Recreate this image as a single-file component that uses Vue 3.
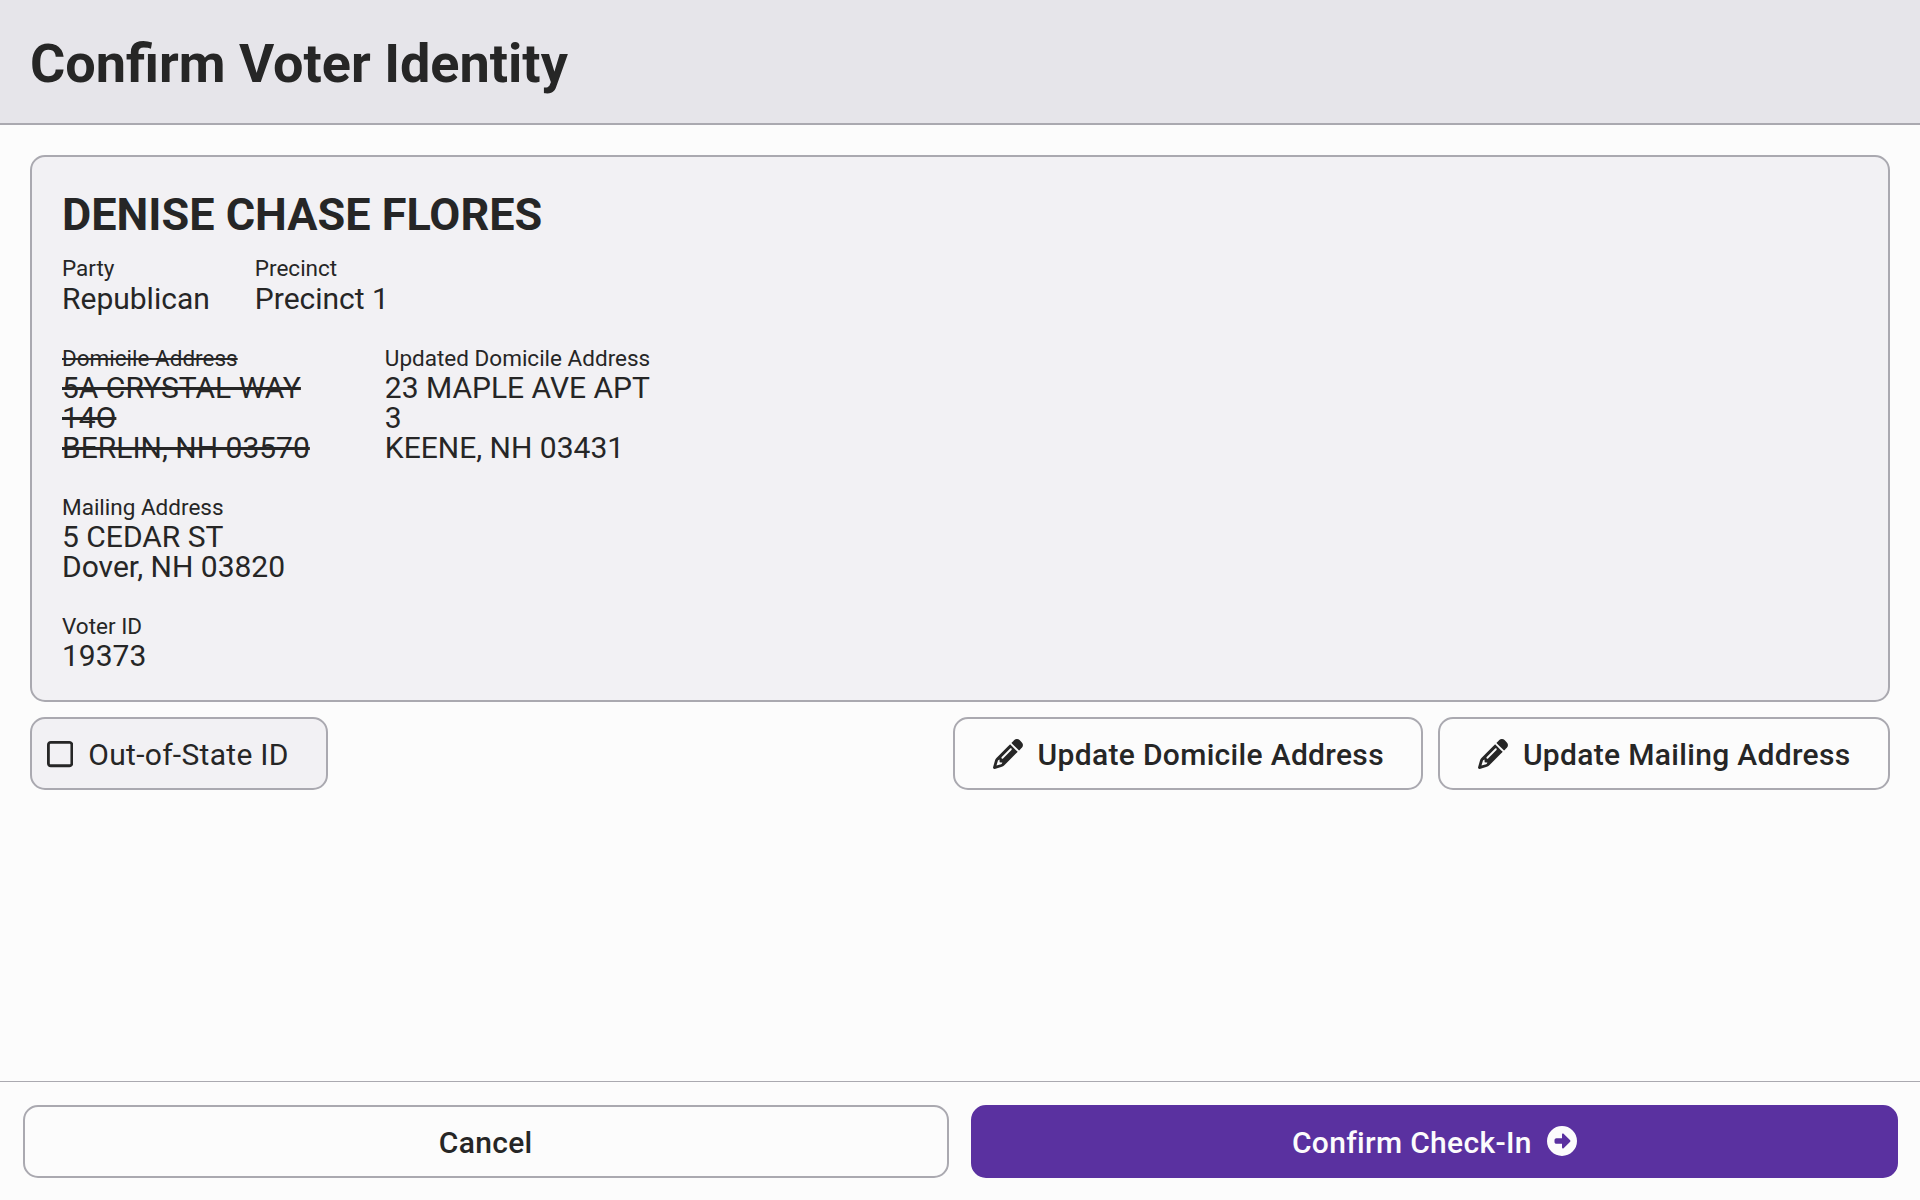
<script setup>
const pencil = 'M410.3 231l11.3-11.3-33.9-33.9-62.1-62.1L291.7 89.8l-11.3 11.3-22.6 22.6L58.6 322.9c-10.4 10.4-18 23.3-22.2 37.4L1 480.7c-2.5 8.4-.2 17.5 6.1 23.7s15.3 8.5 23.7 6.1l120.3-35.4c14.1-4.2 27-11.8 37.4-22.2L387.7 253.7 410.3 231zM160 399.4l-9.1 22.7c-4 3.1-8.5 5.4-13.3 6.9L59.4 452l23-78.1c1.4-4.9 3.8-9.4 6.9-13.3l22.7-9.1v32c0 8.8 7.2 16 16 16h32zM362.7 18.7L348.3 33.2 325.7 55.8 314.3 67.1l33.9 33.9 62.1 62.1 33.9 33.9 11.3-11.3 22.6-22.6 14.5-14.5c25-25 25-65.5 0-90.5L453.3 18.7c-25-25-65.5-25-90.5 0zm-47.4 168l-144 144c-6.2 6.2-16.4 6.2-22.6 0s-6.2-16.4 0-22.6l144-144c6.2-6.2 16.4-6.2 22.6 0s6.2 16.4 0 22.6z'

const updates = ['Update Domicile Address', 'Update Mailing Address']

const rows = [
  {
    kind: 'summary',
    fields: [
      { label: 'Party', lines: ['Republican'] },
      { label: 'Precinct', lines: ['Precinct 1'] },
    ],
  },
  {
    kind: 'address',
    fields: [
      { label: 'Domicile Address', lines: ['5A CRYSTAL WAY', '14O', 'BERLIN, NH 03570'], replaced: true },
      { label: 'Updated Domicile Address', lines: ['23 MAPLE AVE APT', '3', 'KEENE, NH 03431'] },
    ],
  },
  { kind: 'address', fields: [{ label: 'Mailing Address', lines: ['5 CEDAR ST', 'Dover, NH 03820'] }] },
  { kind: 'address', fields: [{ label: 'Voter ID', lines: ['19373'] }] },
]
</script>

<template>
  <div class="screen">
    <header class="header"><h1>Confirm Voter Identity</h1></header>

    <main class="main">
      <section class="card">
        <h2>DENISE CHASE FLORES</h2>
        <div class="rows">
          <div v-for="(row, i) in rows" :key="i" class="row" :class="row.kind">
            <div v-for="field in row.fields" :key="field.label" class="field" :class="{ replaced: field.replaced }">
              <div class="label">{{ field.label }}</div>
              <div v-for="line in field.lines" :key="line" class="value">{{ line }}</div>
            </div>
          </div>
        </div>
      </section>

      <div class="actions">
        <button class="btn checkbox" role="checkbox" aria-checked="false">
          <svg class="square" viewBox="0 0 448 512" aria-hidden="true">
            <path d="M384 80c8.8 0 16 7.2 16 16V416c0 8.8-7.2 16-16 16H64c-8.8 0-16-7.2-16-16V96c0-8.8 7.2-16 16-16H384zM64 32C28.7 32 0 60.7 0 96V416c0 35.3 28.7 64 64 64H384c35.3 0 64-28.7 64-64V96c0-35.3-28.7-64-64-64H64z" />
          </svg>
          <span>Out-of-State ID</span>
        </button>
        <div class="updates">
          <button v-for="text in updates" :key="text" class="btn">
            <svg class="icon" viewBox="0 0 512 512" aria-hidden="true"><path :d="pencil" /></svg>
            <span>{{ text }}</span>
          </button>
        </div>
      </div>
    </main>

    <footer class="footer">
      <button class="btn"><span>Cancel</span></button>
      <button class="btn primary">
        <span>Confirm Check-In</span>
        <svg class="icon" viewBox="0 0 512 512" aria-hidden="true">
          <path d="M0 256a256 256 0 1 0 512 0A256 256 0 1 0 0 256zm395.3 11.3l-112 112c-4.6 4.6-11.5 5.9-17.4 3.5s-9.9-8.3-9.9-14.8l0-64-96 0c-17.7 0-32-14.3-32-32l0-32c0-17.7 14.3-32 32-32l96 0 0-64c0-6.5 3.9-12.3 9.9-14.8s12.9-1.1 17.4 3.5l112 112c6.2 6.2 6.2 16.4 0 22.6z" />
        </svg>
      </button>
    </footer>
  </div>
</template>

<style>
body {
  margin: 0;
  background: #fcfcfc;
}
</style>

<style scoped>
.screen {
  display: flex;
  flex-direction: column;
  box-sizing: border-box;
  height: 100vh;
  background: #fcfcfc;
  color: #262626;
  font: 400 30px/1 Roboto, sans-serif;
}
.header {
  box-sizing: border-box;
  height: 125px;
  padding: 31px 30px 0;
  background: #e6e5ea;
  border-bottom: 2px solid #aaa9b0;
}
h1 {
  margin: 0;
  font-size: 54px;
  line-height: 65px;
  font-weight: 700;
}
.main {
  flex: 1;
  padding: 30px;
}
.card {
  box-sizing: border-box;
  height: 547px;
  padding: 30px;
  background: #f2f1f4;
  border: 2px solid #aaa9b0;
  border-radius: 15px;
}
h2 {
  margin: 0 0 11.3px;
  font-size: 45px;
  line-height: 56px;
  font-weight: 700;
}
.rows {
  display: flex;
  flex-direction: column;
  gap: 30px;
}
.row {
  display: flex;
  gap: 45px;
}
.row.address {
  gap: 75px;
}
.label {
  font-size: 22.5px;
  line-height: 1.3;
}
.value {
  line-height: 30px;
}
.replaced .label,
.replaced .value {
  text-decoration: line-through;
}
.actions {
  display: flex;
  justify-content: space-between;
  margin-top: 15px;
}
.updates {
  display: flex;
  gap: 15px;
}
.btn {
  display: flex;
  align-items: center;
  justify-content: center;
  gap: 15px;
  box-sizing: border-box;
  height: 73px;
  margin: 0;
  padding: 0 37.5px;
  border: 2px solid #aaa9b0;
  border-radius: 15px;
  background: #fcfcfc;
  color: #262626;
  font: 500 30px/1 Roboto, sans-serif;
  letter-spacing: 0.32px;
  white-space: nowrap;
}
.btn span {
  padding-top: 2px;
}
.checkbox {
  padding: 0 37.2px 0 15px;
  background: #f2f1f4;
  font-weight: 400;
  letter-spacing: 0.3px;
}
.icon,
.square {
  width: 30px;
  height: 30px;
  margin-top: 1px;
  fill: currentColor;
}
.square {
  width: 26.25px;
}
.footer {
  display: flex;
  gap: 22.5px;
  box-sizing: border-box;
  height: 119px;
  padding: 23px 22.5px;
  border-top: 1px solid #aaa9b0;
}
.footer .btn {
  flex: 1;
}
.footer .primary {
  border-color: #5a31a0;
  background: #5a31a0;
  color: #fcfcfc;
}
.primary .icon {
  margin: 0 0 1px;
}
</style>
